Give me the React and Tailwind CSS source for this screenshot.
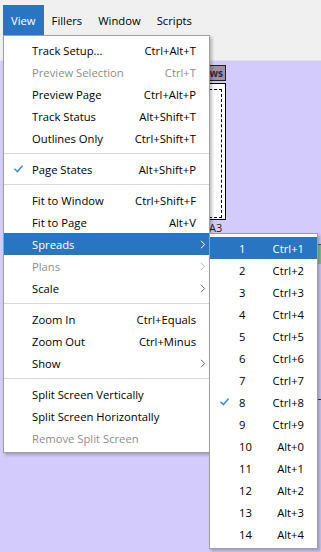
import React from "react";

const Check = ({ color = "#3b8de0" }) => (
  <svg width="9" height="8" viewBox="0 0 9 8" fill="none">
    <path d="M1 4.2 L3.4 6.6 L8 1.2" stroke={color} strokeWidth="1.5" strokeLinecap="square" />
  </svg>
);

const Arrow = ({ color }) => (
  <svg width="6" height="9" viewBox="0 0 6 9" fill="none">
    <path d="M1 0.8 L4.6 4.5 L1 8.2" stroke={color} strokeWidth="1" />
  </svg>
);

const mainItems = [
  { label: "Track Setup...", sc: "Ctrl+Alt+T" },
  { label: "Preview Selection", sc: "Ctrl+T", disabled: true },
  { label: "Preview Page", sc: "Ctrl+Alt+P" },
  { label: "Track Status", sc: "Alt+Shift+T" },
  { label: "Outlines Only", sc: "Ctrl+Shift+T" },
  { sep: true },
  { label: "Page States", sc: "Alt+Shift+P", checked: true },
  { sep: true },
  { label: "Fit to Window", sc: "Ctrl+Shift+F" },
  { label: "Fit to Page", sc: "Alt+V" },
  { label: "Spreads", sub: true, active: true },
  { label: "Plans", sub: true, disabled: true },
  { label: "Scale", sub: true },
  { sep: true },
  { label: "Zoom In", sc: "Ctrl+Equals" },
  { label: "Zoom Out", sc: "Ctrl+Minus" },
  { label: "Show", sub: true },
  { sep: true },
  { label: "Split Screen Vertically" },
  { label: "Split Screen Horizontally" },
  { label: "Remove Split Screen", disabled: true },
];

const subItems = [
  ["1", "Ctrl+1"],
  ["2", "Ctrl+2"],
  ["3", "Ctrl+3"],
  ["4", "Ctrl+4"],
  ["5", "Ctrl+5"],
  ["6", "Ctrl+6"],
  ["7", "Ctrl+7"],
  ["8", "Ctrl+8"],
  ["9", "Ctrl+9"],
  ["10", "Alt+0"],
  ["11", "Alt+1"],
  ["12", "Alt+2"],
  ["13", "Alt+3"],
  ["14", "Alt+4"],
];

function MenuRow({ item }) {
  if (item.sep) {
    return (
      <div className="h-[9px] flex items-center">
        <div className="h-px w-full bg-[#d7d7d7]" />
      </div>
    );
  }
  const textCls = item.active
    ? "text-white"
    : item.disabled
    ? "text-[#8d8d8d]"
    : "text-black";
  return (
    <div className={`h-[22px] flex items-center ${item.active ? "bg-[#2a75c1]" : ""} ${textCls}`}>
      <div className="w-[28px] flex justify-center items-center">
        {item.checked && <Check />}
      </div>
      <div className="flex-1 whitespace-nowrap pt-[1px]">{item.label}</div>
      <div className="whitespace-nowrap pt-[1px]">{item.sc}</div>
      <div className="w-[13px] flex justify-center items-center">
        {item.sub && (
          <Arrow color={item.active ? "#ffffff" : item.disabled ? "#b5b5b5" : "#6a6a6a"} />
        )}
      </div>
    </div>
  );
}

export default function App() {
  return (
    <div
      className="relative w-[321px] h-[552px] overflow-hidden bg-[#d3ccfb] text-[11.25px] leading-none"
      style={{ fontFamily: '"Open Sans", "Noto Sans", sans-serif' }}
    >
      {/* top bar */}
      <div className="h-[61px] bg-[#f0f0f0] border-b border-[#e2e2e2]">
        <div className="flex pt-[5px] pl-[3px] text-black">
          <div className="h-[30px] px-[8px] pt-[2px] flex items-center bg-[#2a75c1] text-white">View</div>
          <div className="h-[30px] px-[8px] pt-[2px] flex items-center">Fillers</div>
          <div className="h-[30px] px-[8px] pt-[2px] flex items-center">Window</div>
          <div className="h-[30px] px-[8px] pt-[2px] flex items-center">Scripts</div>
        </div>
      </div>

      {/* canvas items */}
      <div className="absolute left-[150px] top-[65px] w-[76px] h-[16px] bg-[#a08fa8] border border-[#222] flex items-center justify-end pr-[2px] text-[10px] font-bold text-[#2a2a3a]">
        Views
      </div>
      <div className="absolute left-[120px] top-[83px] w-[106px] h-[137px] bg-white border border-black">
        <div className="absolute left-[4px] right-[3px] top-[5px] bottom-[1px] border border-dashed border-black" />
      </div>
      <div className="absolute left-[209px] top-[222px] text-[11px] text-[#222]">A3</div>
      <div className="absolute left-[318px] top-[244px] w-[3px] h-[20px] bg-[#86c39a] border-t border-[#555]" />
      <div className="absolute left-[318px] top-[399px] w-[3px] h-px bg-[#333]" />

      {/* dropdown */}
      <div className="absolute left-[3px] top-[35px] w-[207px] bg-white border border-[#a0a0a0] py-[3px] shadow-[2px_2px_3px_rgba(0,0,0,0.25)]">
        {mainItems.map((it, i) => (
          <MenuRow key={i} item={it} />
        ))}
      </div>

      {/* submenu */}
      <div className="absolute left-[209px] top-[233px] w-[109px] bg-white border border-[#a0a0a0] py-[3px] shadow-[2px_2px_3px_rgba(0,0,0,0.25)]">
        {subItems.map(([n, sc], i) => {
          const active = i === 0;
          return (
            <div
              key={n}
              className={`h-[22px] flex items-center ${active ? "bg-[#2a75c1] text-white" : "text-black"}`}
            >
              <div className="w-[29px] flex justify-center items-center">
                {n === "8" && <Check />}
              </div>
              <div className="flex-1 pt-[1px]">{n}</div>
              <div className="pt-[1px]">{sc}</div>
              <div className="w-[13px]" />
            </div>
          );
        })}
      </div>
    </div>
  );
}
